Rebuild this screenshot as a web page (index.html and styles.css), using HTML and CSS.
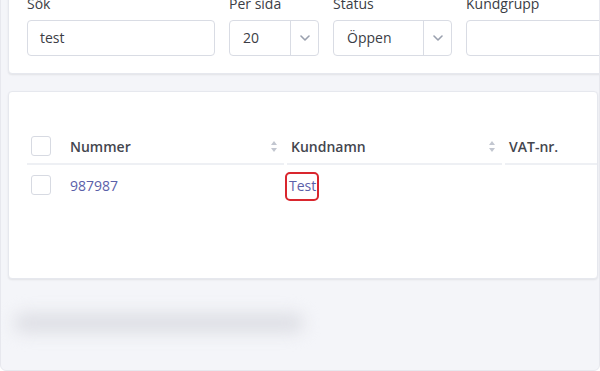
FILE: index.html
```html
<!DOCTYPE html>
<html lang="sv">
<head>
    <meta charset="UTF-8">
    <title>Kunder</title>
    <link rel="stylesheet" href="styles.css">
</head>
<body>
<div class="frame">
    <!-- filter -->
    <div class="card filters">
        <div class="field">
            <label>Sök</label>
            <div class="input">test</div>
        </div>
        <div class="field">
            <label>Per sida</label>
            <div class="select">
                <span class="value">20</span>
                <span class="arrow"><svg width="10" height="6" viewBox="0 0 10 6"><path d="M1 1l4 4 4-4" fill="none" stroke="#9aa0ae" stroke-width="1.6" stroke-linecap="round" stroke-linejoin="round"/></svg></span>
            </div>
        </div>
        <div class="field">
            <label>Status</label>
            <div class="select">
                <span class="value">Öppen</span>
                <span class="arrow"><svg width="10" height="6" viewBox="0 0 10 6"><path d="M1 1l4 4 4-4" fill="none" stroke="#9aa0ae" stroke-width="1.6" stroke-linecap="round" stroke-linejoin="round"/></svg></span>
            </div>
        </div>
        <div class="field">
            <label>Kundgrupp</label>
            <div class="input"></div>
        </div>
    </div>

    <!-- tabell -->
    <div class="card list">
        <div class="row head">
            <div class="cell first">
                <span class="check"></span>
                <span class="title">Nummer</span>
                <span class="sort"></span>
            </div>
            <div class="cell second">
                <span class="title">Kundnamn</span>
                <span class="sort"></span>
            </div>
            <div class="cell third">
                <span class="title">VAT-nr.</span>
            </div>
        </div>
        <div class="row">
            <div class="cell first">
                <span class="check"></span>
                <a href="#" class="link">987987</a>
            </div>
            <div class="cell second">
                <a href="#" class="link marked">Test</a>
            </div>
            <div class="cell third"></div>
        </div>
    </div>

    <div class="pager">
        <div class="blurred"></div>
    </div>
</div>
</body>
</html>
```

FILE: styles.css
```css
* {
    margin: 0;
    padding: 0;
    box-sizing: border-box;
}

html, body {
    background: #fff;
    overflow: hidden;
    height: 371px;
}

body {
    font-family: "Open Sans", "Liberation Sans", sans-serif;
    font-size: 14px;
    color: #3b3d45;
}

.frame { /* yttre ram, toppen ligger utanför bilden */
    margin-top: -20px;
    height: 391px;
    background: #f4f5f9;
    border: 1px solid #e7e8ee;
    border-radius: 6px;
    padding: 0 1px 0 7px;
    overflow: hidden;
}

.card {
    background: #fff;
    border: 1px solid #e6e8ee;
    border-radius: 4px;
    box-shadow: 0 1px 2px rgba(0, 0, 0, .08);
}

.filters {
    display: grid;
    grid-template-columns: 188px 90px 119px 1fr;
    column-gap: 14px;
    padding: 12px 0 17px 18px;
    margin-right: -30px;
}

.field label {
    display: block;
    line-height: 20px;
    margin-bottom: 6px;
    color: #3b3d45;
}

.input, .select {
    height: 36px;
    border: 1px solid #d9dce4;
    border-radius: 4px;
    line-height: 34px;
    padding-left: 12px;
    color: #3b3d45;
}

.select {
    display: flex;
    padding-left: 0;
}

.select .value {
    flex: 1;
    padding-left: 13px;
}

.select .arrow {
    width: 28px;
    border-left: 1px solid #d9dce4;
    display: flex;
    align-items: center;
    justify-content: center;
}

.list {
    margin-top: 17px;
    height: 188px;
    padding: 37px 0 0 18px;
}

.row {
    display: flex;
    column-gap: 3px;
    height: 40px;
    align-items: center;
}

.row.head {
    height: 36px;
    align-items: stretch;
}

.head .cell {
    border-bottom: 2px solid #eef0f4;
    display: flex;
    align-items: center;
    font-weight: 600;
    color: #44464e;
}

.cell {
    display: flex;
    align-items: center;
}

.cell.first {
    width: 257px;
    padding-left: 4px;
}

.cell.second {
    width: 215px;
    padding-left: 4px;
}

.cell.third {
    flex: 1;
    padding-left: 4px;
}

.check {
    width: 20px;
    height: 20px;
    border: 1px solid #d7dae2;
    border-radius: 3px;
    margin-right: 19px;
    background: #fff;
}

.title {
    flex: 1;
}

.sort { /* pilar upp/ner */
    width: 7px;
    height: 11px;
    margin-right: 6px;
    position: relative;
}

.sort:before, .sort:after {
    content: "";
    position: absolute;
    left: 0;
    border-left: 3.5px solid transparent;
    border-right: 3.5px solid transparent;
}

.sort:before {
    top: 0;
    border-bottom: 4px solid #c2c6d0;
}

.sort:after {
    bottom: 0;
    border-top: 4px solid #c2c6d0;
}

.link {
    color: #5b60a9;
    text-decoration: none;
}

.marked { /* markering i bilden */
    display: inline-block;
    border: 2px solid #d9262e;
    border-radius: 5px;
    padding: 3px 1px 4px 2px;
    margin-left: -6px;
    margin-top: 2px;
    line-height: 18px;
}

.pager {
    padding: 34px 0 0 6px;
}

.blurred {
    width: 290px;
    height: 20px;
    background: #dedfe5;
    border-radius: 10px;
    filter: blur(8px);
}
```
